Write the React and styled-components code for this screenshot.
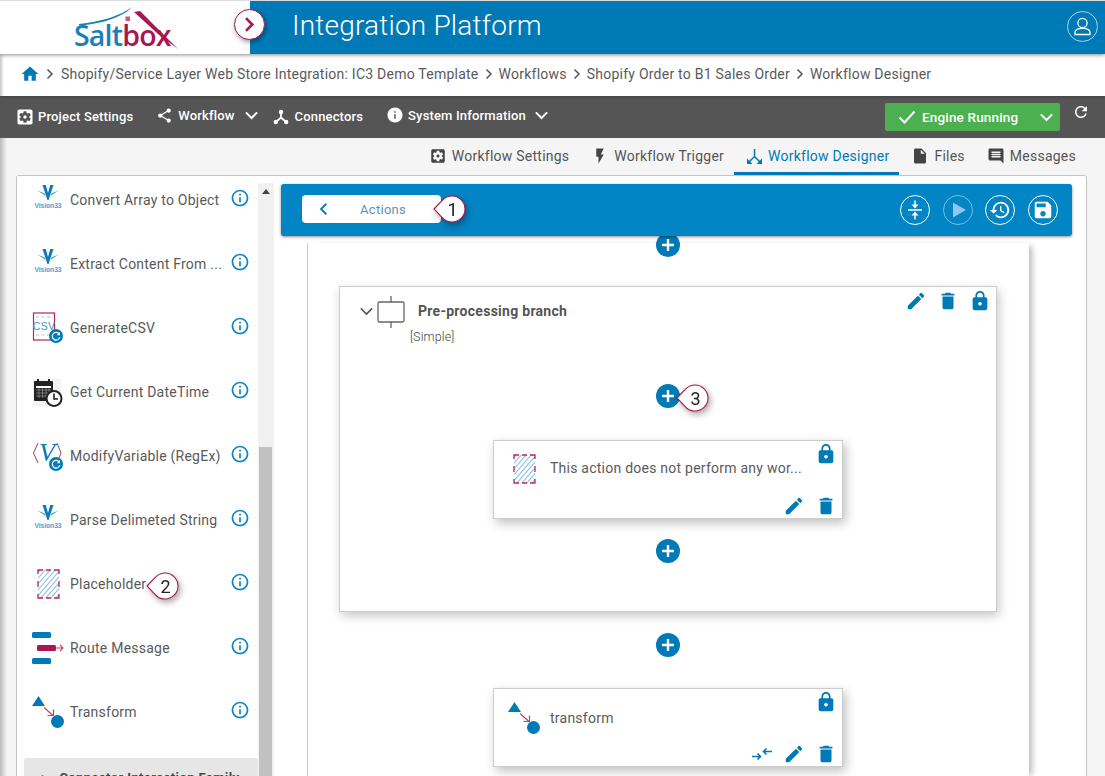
import React from "react";
import styled, { createGlobalStyle } from "styled-components";

const BLUE = "#007ab6";
const BAR = "#0285c4";
const CRIMSON = "#a8174f";
const TEXT = "#555";

const Global = createGlobalStyle`
  html, body { margin: 0; padding: 0; height: 776px; overflow: hidden; background: #f5f5f5; }
  body { font-family: Roboto, "Liberation Sans", sans-serif; color: ${TEXT}; }
  * { box-sizing: border-box; }
`;

const Page = styled.div`
  height: 776px; display: flex; flex-direction: column; overflow: hidden;
  border-top: 1px solid #ddd;
`;
const Header = styled.header`
  position: relative; z-index: 3; flex: 0 0 53px; display: grid; grid-template-columns: 250px 1fr;
  box-shadow: 0 1px 4px rgba(0,0,0,.45);
`;
const LogoCell = styled.div`background: #fff; overflow: hidden;`;
const TitleCell = styled.div`
  background: ${BLUE}; display: flex; align-items: center; justify-content: space-between;
  padding: 0 7px 3px 42px;
`;
const Title = styled.h1`
  margin: 0; color: #fff; font-weight: 300; font-size: 28px; letter-spacing: .2px; line-height: 50px;
`;
const Toggle = styled.button`
  position: absolute; left: 234px; top: 8px; width: 31px; height: 31px; border-radius: 50%; padding: 0;
  background: #fff; border: 1px solid ${CRIMSON}; box-shadow: 1px 2px 5px rgba(0,0,0,.4);
  display: flex; align-items: center; justify-content: center;
`;
const Crumbs = styled.nav`
  position: relative; z-index: 2; flex: 0 0 42px; display: flex; align-items: center; gap: 4px; padding: 0 0 3px 20px;
  background: linear-gradient(to right, #c8c8c8, #fff 4px);
  box-shadow: 0 1px 3px rgba(0,0,0,.25);
  font-size: 14px; letter-spacing: .24px; color: #5a5a5a;
`;
const CrumbText = styled.span`white-space: nowrap; margin-left: ${p => p.$first ? 1 : 0}px;`;
const Toolbar = styled.div`
  flex: 0 0 42px; background: #555; display: flex; align-items: flex-start; padding: 0 15px 0 15px; color: #fff;
`;
const ToolItem = styled.div`
  height: 40px; display: flex; align-items: center; gap: ${p => p.$iconGap ?? 5}px; margin-left: ${p => p.$gap || 0}px;
  padding-top: ${p => p.$low ? 1 : 0}px; padding-bottom: ${p => p.$low ? 0 : 2}px;
  font-size: 13px; font-weight: 500; letter-spacing: .16px; white-space: nowrap;
`;
const ToolChevron = styled.span`display: flex; margin-left: 4px;`;
const ToolRight = styled.div`margin-left: auto; display: flex; align-items: flex-start; gap: 12px; padding-top: 7px;`;
const Engine = styled.button`
  width: 175px; height: 28px; border: 0; border-radius: 2px; background: #4caf50; color: #fff; padding: 0 6px 0 13px;
  display: flex; align-items: center; gap: 6px; font: 500 13.5px Roboto, sans-serif; letter-spacing: .17px;
`;
const EngineChevron = styled.span`margin-left: auto; display: flex;`;
const Workspace = styled.div`
  flex: 1; min-height: 0; display: flex; flex-direction: column;
  background: linear-gradient(to right, #bbb, #f5f5f5 7px);
`;
const Tabs = styled.div`
  flex: 0 0 37px; display: flex; justify-content: flex-end; padding-right: 19px;
`;
const Tab = styled.div`
  display: flex; align-items: center; gap: 5px; padding: 2px 10px 0 12px; font-size: 14px; letter-spacing: .24px;
  white-space: nowrap; color: ${p => p.$active ? BLUE : TEXT};
  border-bottom: 3px solid ${p => p.$active ? BLUE : "transparent"};
`;
const Panel = styled.div`
  flex: 1; min-height: 0; margin: 0 18px -3px 16px; background: #fff; border: 1px solid #c4c4c4; border-radius: 3px;
  display: flex; overflow: hidden;
`;
const Sidebar = styled.aside`
  flex: 0 0 241px; padding-left: 7px; overflow: hidden; background: #fff;
`;
const List = styled.div`margin-top: -8px;`;
const Row = styled.div`
  position: relative; height: 64px; display: flex; align-items: center; padding: 0 8px 0 8px;
  font-size: 14px; letter-spacing: .23px; color: #5a5a5a; white-space: nowrap;
`;
const RowIcon = styled.span`flex: 0 0 32px; display: flex; align-items: center; justify-content: ${p => p.$center ? "center" : "flex-start"};`;
const RowLabel = styled.span`margin-left: 6px;`;
const RowInfo = styled.span`margin-left: auto; margin-bottom: 4px; display: flex;`;
const Family = styled.div`
  margin-top: 14px; height: 40px; background: #e6e6e6; border-radius: 3px 3px 0 0; padding: 12px 0 0 18px;
  display: flex; gap: 10px;
  font-size: 13px; font-weight: 700; letter-spacing: .4px; color: #444; white-space: nowrap;
`;
const ScrollTrack = styled.div`
  flex: 0 0 16px; margin-top: 7px; background: #f1f1f1; display: flex; flex-direction: column; align-items: flex-start; padding-left: 1px;
`;
const ScrollArrow = styled.span`
  margin: 6px 0 0 3px; width: 0; height: 0; border-left: 4px solid transparent; border-right: 4px solid transparent; border-bottom: 5px solid #444;
`;
const ScrollThumb = styled.span`
  width: 13px; flex: 1; margin-top: 253px; background: #c1c1c1;
`;
const Main = styled.main`
  flex: 1; min-width: 0; padding: 8px 14px 0 7px; display: flex; flex-direction: column; overflow: hidden;
`;
const Bar = styled.div`
  position: relative; z-index: 2; flex: 0 0 52px; background: ${BAR}; border-radius: 3px; box-shadow: 0 1px 3px rgba(0,0,0,.45);
  display: flex; align-items: flex-start; justify-content: space-between; padding: 11px 14px 0 21px;
`;
const BackButton = styled.div`
  position: relative; width: 139px; height: 28px; background: #fff; border-radius: 4px; display: flex; align-items: center;
  padding-left: 15px; font-size: 13px; letter-spacing: .3px; color: #6090b4;
`;
const BackLabel = styled.span`margin-left: 29px;`;
const RoundRow = styled.div`display: flex; gap: 12.67px;`;
const Round = styled.span`
  width: 30px; height: 30px; border-radius: 50%; border: 1px solid rgba(255,255,255,${p => p.$dim ? .45 : 1});
  display: flex; align-items: center; justify-content: center;
`;
const Canvas = styled.div`
  flex: 1; width: 722px; margin: 7px 0 0 26px; padding-right: 1px; background: #fff; border-left: 1px solid #ccc;
  box-shadow: 6px 0 6px -3px rgba(0,0,0,.28); display: flex; flex-direction: column; align-items: center;
`;
const Plus = styled.span`
  position: relative; flex: 0 0 24px; width: 24px; height: 24px; border-radius: 50%; background: ${BLUE};
  display: flex; align-items: center; justify-content: center; margin-top: ${p => p.$top}px;
`;
const Branch = styled.section`
  flex: 0 0 326px; width: 658px; margin-top: 29px; background: #fff; border: 1px solid #ccc;
  box-shadow: 2px 4px 10px rgba(0,0,0,.22);
`;
const BranchHead = styled.div`display: flex; align-items: flex-start; height: 43px; padding: 3px 5px 0 19px;`;
const HeadChevron = styled.span`display: flex; margin-top: 14px;`;
const HeadBox = styled.span`display: flex; margin: 6px 0 0 3px;`;
const BranchTitle = styled.strong`
  margin: 12px 0 0 13px; font-size: 14px; font-weight: 700; letter-spacing: .28px; line-height: 18px; color: #555;
`;
const IconRow = styled.div`display: flex; gap: 10px; margin-left: auto;`;
const Simple = styled.div`margin-left: 70px; font-size: 12.5px; font-weight: 300; line-height: 14px; letter-spacing: .12px; color: #444;`;
const BranchBody = styled.div`display: flex; flex-direction: column; align-items: center; margin-top: 40px;`;
const Card = styled.article`
  flex: 0 0 79px; width: 350px; height: 79px; margin-top: ${p => p.$top}px; background: #fff; border: 1px solid #ccc;
  box-shadow: 3px 4px 10px rgba(0,0,0,.25); display: flex; flex-direction: column; justify-content: space-between;
`;
const CardTop = styled.div`display: flex; align-items: flex-start; padding: 2px 5px 0 14px;`;
const CardIcon = styled.span`flex: 0 0 32px; display: flex; justify-content: center; margin-top: 11px;`;
const CardText = styled.span`
  margin: ${p => p.$top}px 0 0 10px; font-size: 14px; line-height: 28px; letter-spacing: .24px; color: #5a5a5a; white-space: nowrap;
`;
const CardLock = styled.span`display: flex; margin-left: auto;`;
const CardBottom = styled.div`display: flex; justify-content: flex-end; gap: 10px; padding: 0 5px 1px 0;`;
const Callout = styled.span`
  position: absolute; left: ${p => p.$left}px; top: ${p => p.$top}px; width: 34px; height: 30px; z-index: 4;
  filter: drop-shadow(2px 3px 3px rgba(0,0,0,.35));
`;
const CalloutNum = styled.span`
  position: absolute; left: 7px; top: 0; width: 25px; height: 28px; text-align: center;
  font: 400 18px/29px Roboto, sans-serif; color: #222; letter-spacing: 0;
`;
const Svg = styled.svg`display: block; flex: none; overflow: visible;`;

const P = {
  home: "M10 20v-6h4v6h5v-8h3L12 3 2 12h3v8z",
  gear: "M12 10c-1.1 0-2 .9-2 2s.9 2 2 2 2-.9 2-2-.9-2-2-2zm7-7H5c-1.11 0-2 .9-2 2v14c0 1.1.89 2 2 2h14c1.11 0 2-.9 2-2V5c0-1.1-.89-2-2-2zm-1.75 9c0 .23-.02.46-.05.68l1.48 1.16c.13.11.17.3.08.45l-1.4 2.42c-.09.15-.27.21-.43.15l-1.74-.7c-.36.28-.76.51-1.18.69l-.26 1.85c-.03.17-.18.3-.35.3h-2.8c-.17 0-.32-.13-.35-.29l-.26-1.85c-.43-.18-.82-.41-1.18-.69l-1.74.7c-.16.06-.34 0-.43-.15l-1.4-2.42c-.09-.15-.05-.34.08-.45l1.48-1.16c-.03-.23-.05-.46-.05-.69 0-.23.02-.46.05-.68l-1.48-1.16c-.13-.11-.17-.3-.08-.45l1.4-2.42c.09-.15.27-.21.43-.15l1.74.7c.36-.28.76-.51 1.18-.69l.26-1.85c.03-.17.18-.3.35-.3h2.8c.17 0 .32.13.35.29l.26 1.85c.43.18.82.41 1.18.69l1.74-.7c.16-.06.34 0 .43.15l1.4 2.42c.09.15.05.34-.08.45l-1.48 1.16c.03.23.05.46.05.69z",
  share: "M18 16.08c-.76 0-1.44.3-1.96.77L8.91 12.7c.05-.23.09-.46.09-.7s-.04-.47-.09-.7l7.05-4.11c.54.5 1.25.81 2.04.81 1.66 0 3-1.34 3-3s-1.34-3-3-3-3 1.34-3 3c0 .24.04.47.09.7L8.04 9.81C7.5 9.31 6.79 9 6 9c-1.66 0-3 1.34-3 3s1.34 3 3 3c.79 0 1.5-.31 2.04-.81l7.12 4.16c-.05.21-.08.43-.08.65 0 1.61 1.31 2.92 2.92 2.92 1.61 0 2.92-1.31 2.92-2.92s-1.31-2.92-2.92-2.92z",
  info: "M12 2C6.48 2 2 6.48 2 12s4.48 10 10 10 10-4.48 10-10S17.52 2 12 2zm1 15h-2v-6h2v6zm0-8h-2V7h2v2z",
  infoO: "M11 17h2v-6h-2v6zm1-15C6.48 2 2 6.48 2 12s4.48 10 10 10 10-4.48 10-10S17.52 2 12 2zm0 18c-4.41 0-8-3.59-8-8s3.59-8 8-8 8 3.59 8 8-3.59 8-8 8zM11 9h2V7h-2v2z",
  flash: "M7 2v11h3v9l7-12h-4l4-8z",
  file: "M6 2c-1.1 0-1.99.9-1.99 2L4 20c0 1.1.89 2 1.99 2H18c1.1 0 2-.9 2-2V8l-6-6H6zm7 7V3.5L18.5 9H13z",
  msg: "M21.99 4c0-1.1-.89-2-1.99-2H4c-1.1 0-2 .9-2 2v12c0 1.1.9 2 2 2h14l4 4-.01-18zM18 14H6v-2h12v2zm0-3H6V9h12v2zm0-3H6V6h12v2z",
  refresh: "M17.65 6.35C16.2 4.9 14.21 4 12 4c-4.42 0-7.99 3.58-7.99 8s3.57 8 7.99 8c3.73 0 6.84-2.55 7.73-6h-2.08c-.82 2.33-3.04 4-5.65 4-3.31 0-6-2.69-6-6s2.69-6 6-6c1.66 0 3.14.69 4.22 1.78L13 11h7V4l-2.35 2.35z",
  pencil: "M3 17.25V21h3.75L17.81 9.94l-3.75-3.75L3 17.25zM20.71 7.04c.39-.39.39-1.02 0-1.41l-2.34-2.34c-.39-.39-1.02-.39-1.41 0l-1.83 1.83 3.75 3.75 1.83-1.83z",
  trash: "M6 19c0 1.1.9 2 2 2h8c1.1 0 2-.9 2-2V7H6v12zM19 4h-3.5l-1-1h-5l-1 1H5v2h14V4z",
  lock: "M18 8h-1V6c0-2.76-2.24-5-5-5S7 3.24 7 6v2H6c-1.1 0-2 .9-2 2v10c0 1.1.9 2 2 2h12c1.1 0 2-.9 2-2V10c0-1.1-.9-2-2-2zm-6 9c-1.1 0-2-.9-2-2s.9-2 2-2 2 .9 2 2-.9 2-2 2zm3.1-9H8.9V6c0-1.71 1.39-3.1 3.1-3.1 1.71 0 3.1 1.39 3.1 3.1v2z",
  save: "M17 3H5c-1.11 0-2 .9-2 2v14c0 1.1.89 2 2 2h14c1.1 0 2-.9 2-2V7l-4-4zm-5 16c-1.66 0-3-1.34-3-3s1.34-3 3-3 3 1.34 3 3-1.34 3-3 3zm3-10H5V5h10v4z",
  history: "M13 3c-4.97 0-9 4.03-9 9H1l3.89 3.89.07.14L9 12H6c0-3.87 3.13-7 7-7s7 3.13 7 7-3.13 7-7 7c-1.93 0-3.68-.79-4.94-2.06l-1.42 1.42C8.27 19.99 10.51 21 13 21c4.97 0 9-4.03 9-9s-4.03-9-9-9zm-1 5v5l4.28 2.54.72-1.21-3.5-2.08V8H12z",
};

const Mat = ({ d, size = 20, color = "currentColor" }) => (
  <Svg width={size} height={size} viewBox="0 0 24 24"><path d={d} fill={color} /></Svg>
);
const Chevron = ({ dir = "down", size = 12, color = "#fff", w = 2 }) => {
  const pts = { down: "1.5,3.5 6,8 10.5,3.5", right: "3.5,1.5 8,6 3.5,10.5", left: "8,1.5 3.5,6 8,10.5" }[dir];
  return <Svg width={size} height={size} viewBox="0 0 12 12"><polyline points={pts} fill="none" stroke={color} strokeWidth={w * 12 / size} /></Svg>;
};

const SaltboxLogo = () => (
  <Svg width="250" height="53" viewBox="0 0 250 53">
    <path d="M79 23 C100 21 120 15 132 6 C122 17 100 23 79 24.5Z" fill="#1a80b6" />
    <rect x="125.5" y="15.5" width="4.500" height="4.500" fill="#c9597f" />
    <text x="74" y="45" fontFamily="'Open Sans', sans-serif" fontWeight="600" fontSize="28.500" letterSpacing="-.8" fill="#1a80b6">Salt<tspan fill={CRIMSON}>box</tspan></text>
    <path d="M134 11 L140 10 L178 48 L158 33 Z" fill={CRIMSON} />
  </Svg>
);
const UserIcon = () => (
  <Svg width="31" height="31" viewBox="0 0 31 31">
    <circle cx="15.5" cy="15.5" r="15" fill="none" stroke="#d5e8f3" strokeWidth=".8" />
    <circle cx="15.5" cy="12" r="4.6" fill="none" stroke="#fff" strokeWidth="1.3" />
    <path d="M8 23.5v-2c0-2.4 2.4-4.2 7.5-4.2s7.5 1.8 7.5 4.2v2z" fill="none" stroke="#fff" strokeWidth="1.3" />
  </Svg>
);
const ConnectorIcon = ({ color = "#fff", size = 16 }) => (
  <Svg width={size} height={size} viewBox="0 0 16 16">
    <path d="M8 3v5.5M8 8.500L3 13M8 8.500L13 13" stroke={color} strokeWidth="1.8" fill="none" />
    <circle cx="8" cy="3" r="2.2" fill={color} /><circle cx="2.8" cy="13" r="2.2" fill={color} /><circle cx="13.2" cy="13" r="2.2" fill={color} />
  </Svg>
);
const DesignerIcon = () => (
  <Svg width="17" height="17" viewBox="0 0 17 17">
    <path d="M8.5 1v7.5L3 14M8.500 8.500L14 14" stroke={BLUE} strokeWidth="1.5" fill="none" />
    <path d="M1 10.500V16h5.500zM16 10.500V16h-5.500z" fill={BLUE} />
  </Svg>
);
const CheckIcon = () => (
  <Svg width="18" height="16" viewBox="0 0 18 16"><polyline points="1.5,8.5 6.5,13.5 16.5,2.5" fill="none" stroke="#fff" strokeWidth="2" /></Svg>
);
const Vision = () => (
  <Svg width="32" height="30" viewBox="0 0 32 30">
    <path d="M4 5C8 7 11 7 13.500 9.500L12.500 10.500C10 8 7 7 4 5ZM28 5C24 7 21 7 18.500 9.500L19.500 10.500C22 8 25 7 28 5Z" fill="#3f9ccd" />
    <path d="M10.500 0L13.800 0L16 8L18.200 0L21.500 0L16.600 15L15.400 15Z" fill="#0d7bb6" />
    <text x="16" y="23" textAnchor="middle" fontFamily="'Liberation Sans', sans-serif" fontWeight="700" fontSize="6.8" fill="#4ba3cf" letterSpacing="-.1">Vision33</text>
  </Svg>
);
const Badge = () => (
  <g transform="translate(17,17)">
    <circle cx="7" cy="7" r="7" fill={BLUE} />
    <path d="M10.3 5.2A3.8 3.8 0 1 0 10.8 8" fill="none" stroke="#fff" strokeWidth="1.2" />
    <path d="M11 3v3.300H7.800z" fill="#fff" />
  </g>
);
const Csv = () => (
  <Svg width="32" height="32" viewBox="0 0 32 32">
    <rect x="1.5" y="1" width="21" height="27" fill="#fff" stroke="#b8265c" strokeWidth="1.2" />
    <path d="M4 5h17M4 23h17" stroke="#9cc9e3" strokeDasharray="3 2.5" />
    <text x="12" y="18" textAnchor="middle" fontFamily="'Liberation Sans', sans-serif" fontSize="10.5" fill="#3f96c6">CSV</text>
    <Badge />
  </Svg>
);
const Calendar = () => (
  <Svg width="32" height="30" viewBox="0 0 32 30">
    <rect x="1" y="2" width="28" height="27" fill="#f3f3f3" />
    <rect x="2" y="4" width="19" height="20" rx="1" fill="#222" />
    <path d="M4 9h15v2H4z" fill="#fff" />
    <path d="M4 13h15M4 16h15M4 19h15M7 11v10M10.5 11v10M14 11v10M17 11v10" stroke="#888" strokeWidth=".8" />
    <path d="M6 2v4M17 2v4" stroke="#222" strokeWidth="2" />
    <circle cx="22" cy="21.5" r="7.5" fill="#fff" stroke="#222" strokeWidth="2" />
    <path d="M22 16.5v5.500h4" stroke="#222" strokeWidth="1.6" fill="none" />
  </Svg>
);
const ModVar = () => (
  <Svg width="32" height="32" viewBox="0 0 32 32">
    <path d="M6 3L1.5 13 6 23M25 3L29 13 25 23" fill="none" stroke="#b03a66" strokeWidth="1" />
    <text x="15" y="21" textAnchor="middle" fontFamily="'Liberation Serif', serif" fontStyle="italic" fontSize="26" fill={BLUE}>V</text>
    <Badge />
  </Svg>
);
const Hatch = ({ id }) => (
  <Svg width="23" height="30" viewBox="0 0 23 30">
    <defs><clipPath id={id}><rect x="1" y="1" width="21" height="28" /></clipPath></defs>
    <g clipPath={`url(#${id})`} stroke="#8cc3e3" strokeWidth="1.1">
      {[-22, -17, -12, -7, -2, 3, 8, 13, 18, 23].map(k => <line key={k} x1={k} y1="30" x2={k + 26} y2="0" />)}
    </g>
    <path d="M1 5V1h5M17 1h5v4M22 25v4h-5M6 29H1v-4M9 1h5M9 29h5M1 12v6M22 12v6" fill="none" stroke="#b8265c" strokeWidth="1.3" />
  </Svg>
);
const Route = () => (
  <Svg width="32" height="33" viewBox="0 0 32 33">
    <rect x="0" y="0" width="19" height="6" rx="1.5" fill={BLUE} />
    <rect x="5" y="13" width="19" height="6" rx="1.5" fill={CRIMSON} />
    <path d="M24 16h7M28 13l3 3-3 3" stroke="#c0406f" fill="none" strokeWidth="1.1" />
    <rect x="0" y="26" width="19" height="6" rx="1.5" fill={BLUE} />
  </Svg>
);
const Transform = () => (
  <Svg width="32" height="32" viewBox="0 0 32 32">
    <path d="M0 10L6.500 0 13 10z" fill={BLUE} />
    <path d="M12 11.500l9 8M15.500 19.500H21.500V13.500" stroke="#c0406f" fill="none" strokeWidth="1.2" />
    <circle cx="25.5" cy="25.5" r="6.5" fill={BLUE} />
  </Svg>
);
const BranchIcon = () => (
  <Svg width="28" height="32" viewBox="0 0 28 32">
    <rect x="1" y="6" width="26" height="20" rx="1.5" fill="none" stroke="#666" strokeWidth="1.3" />
    <path d="M14 0v6M14 26v6" stroke="#666" strokeWidth="1.3" />
  </Svg>
);
const Collapse = () => (
  <Svg width="20" height="20" viewBox="0 0 20 20">
    <path d="M3 10h14" stroke="#fff" strokeWidth="1.5" />
    <path d="M10 .5v4.500M10 19.500V15" stroke="#fff" strokeWidth="1.5" />
    <path d="M6.500 4.500h7L10 8.500zM6.500 15.500h7L10 11.500z" fill="#fff" />
  </Svg>
);
const Swap = () => (
  <Svg width="22" height="22" viewBox="0 0 22 22">
    <path d="M1 13.500h8M6.500 10.500l3 3-3 3M21 8.500h-8M15.500 5.500l-3 3 3 3" stroke={BLUE} strokeWidth="1.6" fill="none" />
  </Svg>
);
const PlusMark = () => (
  <Svg width="14" height="14" viewBox="0 0 14 14"><path d="M7 1v12M1 7h12" stroke="#fff" strokeWidth="2.4" /></Svg>
);
const Bubble = ({ n, left, top }) => (
  <Callout $left={left} $top={top}>
    <Svg width="34" height="28" viewBox="0 0 34 28">
      <path d="M1 14 L9 5.700 A13 13 0 1 1 9 22.300 Z" fill="#fff" stroke={CRIMSON} strokeWidth="1.1" />
    </Svg>
    <CalloutNum>{n}</CalloutNum>
  </Callout>
);
const CrumbSep = () => <Chevron dir="right" size={12} color="#555" w={1.5} />;

const rows = [
  [<Vision />, "Convert Array to Object"],
  [<Vision />, "Extract Content From ..."],
  [<Csv />, "GenerateCSV"],
  [<Calendar />, "Get Current DateTime"],
  [<ModVar />, "ModifyVariable (RegEx)"],
  [<Vision />, "Parse Delimeted String"],
  [<Hatch id="h1" />, "Placeholder", true],
  [<Route />, "Route Message"],
  [<Transform />, "Transform"],
];

export default function App() {
  return (
    <Page>
      <Global />
      <Header>
        <LogoCell><SaltboxLogo /></LogoCell>
        <TitleCell>
          <Title>Integration Platform</Title>
          <UserIcon />
        </TitleCell>
        <Toggle><Chevron dir="right" size={17} color={CRIMSON} w={2.6} /></Toggle>
      </Header>
      <Crumbs>
        <Mat d={P.home} color={BLUE} />
        <CrumbSep />
        <CrumbText $first>Shopify/Service Layer Web Store Integration: IC3 Demo Template</CrumbText>
        <CrumbSep />
        <CrumbText>Workflows</CrumbText>
        <CrumbSep />
        <CrumbText>Shopify Order to B1 Sales Order</CrumbText>
        <CrumbSep />
        <CrumbText>Workflow Designer</CrumbText>
      </Crumbs>
      <Toolbar>
        <ToolItem $low $iconGap={3}><Mat d={P.gear} size={20} />Project Settings</ToolItem>
        <ToolItem $gap={23}><Mat d={P.share} size={17} />Workflow<ToolChevron><Chevron size={15} /></ToolChevron></ToolItem>
        <ToolItem $gap={14} $low $iconGap={6}><ConnectorIcon />Connectors</ToolItem>
        <ToolItem $gap={23} $iconGap={4}><Mat d={P.info} size={18} />System Information<ToolChevron><Chevron size={15} /></ToolChevron></ToolItem>
        <ToolRight>
          <Engine><CheckIcon />Engine Running<EngineChevron><Chevron size={15} /></EngineChevron></Engine>
          <Mat d={P.refresh} size={18} />
        </ToolRight>
      </Toolbar>
      <Workspace>
        <Tabs>
          <Tab><Mat d={P.gear} size={18} color="#444" />Workflow Settings</Tab>
          <Tab><Mat d={P.flash} size={18} color="#444" />Workflow Trigger</Tab>
          <Tab $active><DesignerIcon />Workflow Designer</Tab>
          <Tab><Mat d={P.file} size={18} color="#444" />Files</Tab>
          <Tab><Mat d={P.msg} size={18} color="#444" />Messages</Tab>
        </Tabs>
        <Panel>
          <Sidebar>
            <List>
              {rows.map(([icon, label, callout]) => (
                <Row key={label}>
                  <RowIcon $center={label === "Placeholder"}>{icon}</RowIcon>
                  <RowLabel>{label}</RowLabel>
                  {callout && <Bubble n="2" left={122} top={20} />}
                  <RowInfo><Mat d={P.infoO} color="#0a84c6" /></RowInfo>
                </Row>
              ))}
            </List>
            <Family><span>▸</span><span>Connector Interaction Family</span></Family>
          </Sidebar>
          <ScrollTrack>
            <ScrollArrow />
            <ScrollThumb />
          </ScrollTrack>
          <Main>
            <Bar>
              <BackButton>
                <Chevron dir="left" size={14} color={BLUE} w={1.8} />
                <BackLabel>Actions</BackLabel>
                <Bubble n="1" left={131} top={0} />
              </BackButton>
              <RoundRow>
                <Round><Collapse /></Round>
                <Round $dim><Svg width="20" height="20" viewBox="0 0 20 20"><path d="M5 2.500L18 10 5 17.500z" fill="#8ec8e6" /></Svg></Round>
                <Round><Mat d={P.history} size={22} color="#fff" /></Round>
                <Round><Mat d={P.save} size={22} color="#fff" /></Round>
              </RoundRow>
            </Bar>
            <Canvas>
              <Plus $top={-10}><PlusMark /></Plus>
              <Branch>
                <BranchHead>
                  <HeadChevron><Chevron size={15} color="#555" w={1.6} /></HeadChevron>
                  <HeadBox><BranchIcon /></HeadBox>
                  <BranchTitle>Pre-processing branch</BranchTitle>
                  <IconRow>
                    <Mat d={P.pencil} size={22} color={BLUE} />
                    <Mat d={P.trash} size={22} color={BLUE} />
                    <Mat d={P.lock} size={22} color={BLUE} />
                  </IconRow>
                </BranchHead>
                <Simple>[Simple]</Simple>
                <BranchBody>
                  <Plus $top={0}><PlusMark /><Bubble n="3" left={20} top={0} /></Plus>
                  <Card $top={32}>
                    <CardTop>
                      <CardIcon><Hatch id="h2" /></CardIcon>
                      <CardText $top={11}>This action does not perform any wor...</CardText>
                      <CardLock><Mat d={P.lock} size={22} color={BLUE} /></CardLock>
                    </CardTop>
                    <CardBottom>
                      <Mat d={P.pencil} size={22} color={BLUE} />
                      <Mat d={P.trash} size={22} color={BLUE} />
                    </CardBottom>
                  </Card>
                  <Plus $top={20}><PlusMark /></Plus>
                </BranchBody>
              </Branch>
              <Plus $top={21}><PlusMark /></Plus>
              <Card $top={31}>
                <CardTop>
                  <CardIcon><Transform /></CardIcon>
                  <CardText $top={13}>transform</CardText>
                  <CardLock><Mat d={P.lock} size={22} color={BLUE} /></CardLock>
                </CardTop>
                <CardBottom>
                  <Swap />
                  <Mat d={P.pencil} size={22} color={BLUE} />
                  <Mat d={P.trash} size={22} color={BLUE} />
                </CardBottom>
              </Card>
            </Canvas>
          </Main>
        </Panel>
      </Workspace>
    </Page>
  );
}
